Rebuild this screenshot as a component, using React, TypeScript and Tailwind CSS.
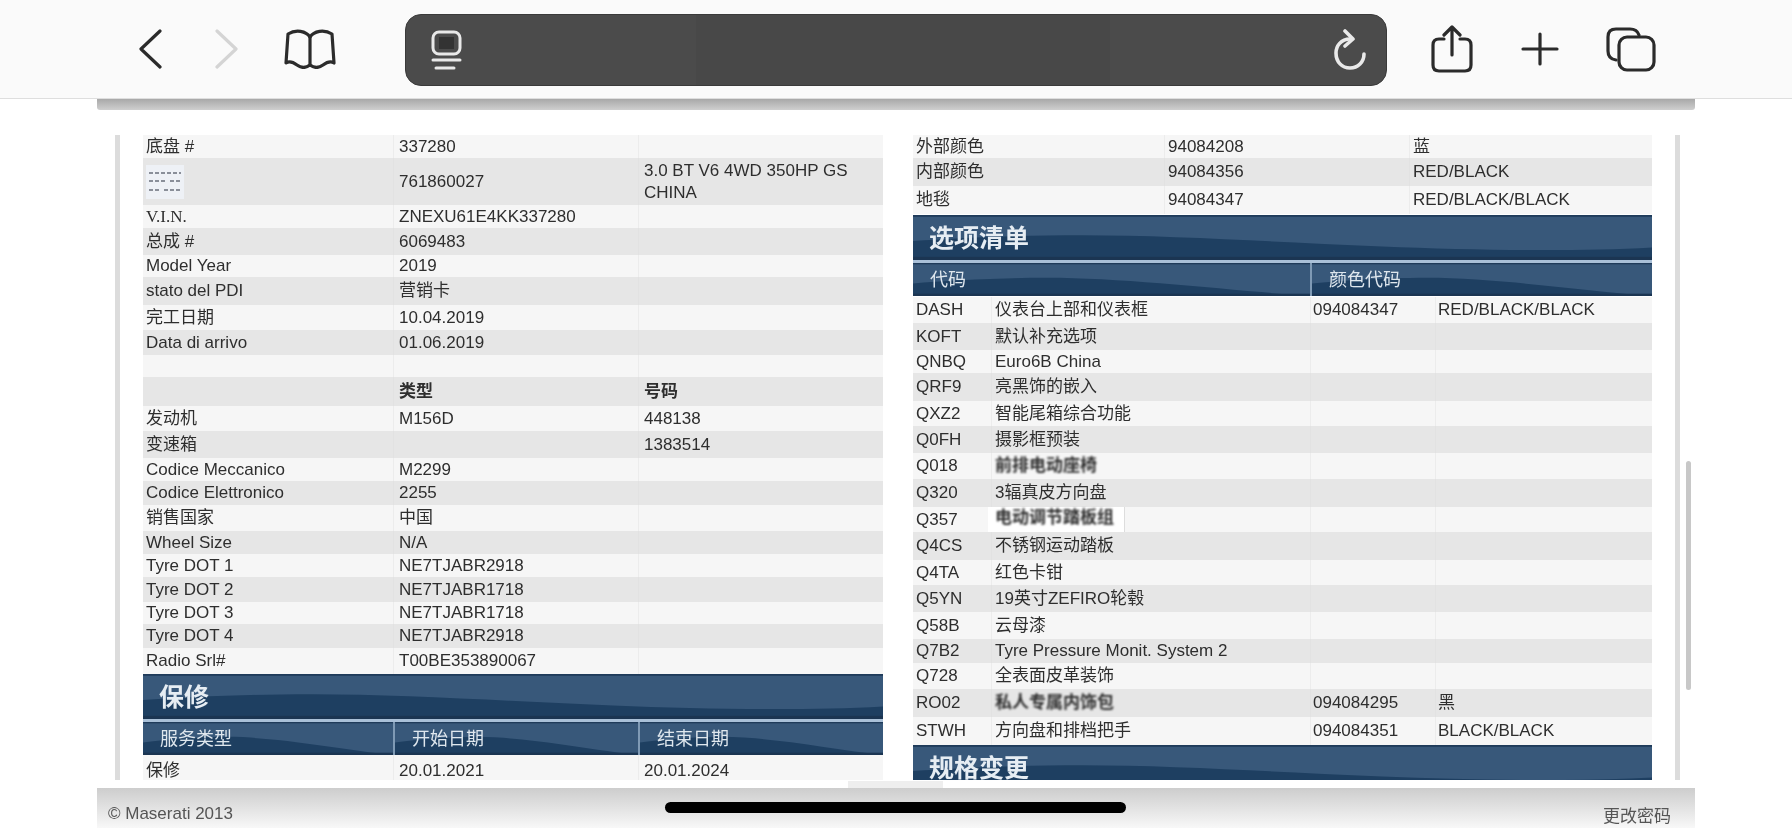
import React from "react";

const Wave = ({ small }: { small?: boolean }) => (
  <svg className="absolute inset-0 w-full h-full" viewBox="0 0 740 100" preserveAspectRatio="none">
    <rect width="740" height="100" fill="#1e3f61" />
    <path
      d={small ? "M0 0H740V100C600 85 400 45 250 45C150 45 60 55 0 62Z" : "M0 0H740V72C660 82 560 78 470 70C360 60 260 45 170 45C100 45 40 52 0 58Z"}
      fill="#38587a"
    />
    <rect width="740" height="4" fill="#1f3b5a" />
    <rect y="93" width="740" height="7" fill="#1b3552" />
  </svg>
);

const Band = ({ title }: { title: string }) => (
  <div className="relative h-[45px] overflow-hidden">
    <Wave />
    <div className="relative pl-[16px] text-[25px] leading-[46px] font-bold text-[#e6edf3]">{title}</div>
  </div>
);

const HeadRow = ({ cols, grid }: { cols: string[]; grid: string }) => (
  <div className={`grid ${grid} h-[36px] border-t-[3px] border-[#a9c0d8]`}>
    {cols.map((c, i) => (
      <div key={i} className={`relative overflow-hidden ${i ? "border-l-2 border-[#7f9ab5]" : ""}`}>
        <Wave small />
        <div className="relative pl-[17px] text-[18px] leading-[34px] text-[#dfe7ee]">{c}</div>
      </div>
    ))}
  </div>
);

type R = { h: string; c: React.ReactNode[]; bold?: boolean };

const Rows = ({ rows, grid, pads }: { rows: R[]; grid: string; pads: string[] }) => (
  <div>
    {rows.map((r, i) => (
      <div key={i} className={`grid ${grid} ${r.h} ${i % 2 ? "bg-[#e6e6e6]" : "bg-[#f6f6f6]"}`}>
        {r.c.map((t, j) => (
          <div
            key={j}
            className={`${pads[j]} ${j ? (i % 2 ? "border-l border-[#e2e2e2]" : "border-l border-[#ececec]") : ""} ${r.bold ? "font-bold" : ""} flex items-center whitespace-nowrap leading-[22px] text-[#2e2e2e]`}
          >
            {t}
          </div>
        ))}
      </div>
    ))}
  </div>
);

const Smudged = ({ children }: { children: React.ReactNode }) => <span className="blur-[1px] font-bold">{children}</span>;

const L = "grid-cols-[250px_245px_245px]";
const lp = ["pl-[3px]", "pl-[5px]", "pl-[5px]"];

const leftRows: R[] = [
  { h: "h-[23px]", c: ["底盘 #", "337280", ""] },
  {
    h: "h-[47px]",
    c: [
      <svg width="38" height="34" viewBox="0 0 38 34" className="blur-[0.6px]">
        <rect width="38" height="34" fill="#eef1f6" />
        <path d="M3 8H35M3 16H20M24 16H35M3 25H14M18 25H35" stroke="#8a8f99" strokeWidth="2" strokeDasharray="4 2" />
      </svg>,
      "761860027",
      <div className="whitespace-normal pr-[20px]">3.0 BT V6 4WD 350HP GS CHINA</div>,
    ],
  },
  { h: "h-[23px]", c: [<span className="font-['Liberation_Serif',serif]">V.I.N.</span>, "ZNEXU61E4KK337280", ""] },
  { h: "h-[27px]", c: ["总成 #", "6069483", ""] },
  { h: "h-[22px]", c: ["Model Year", "2019", ""] },
  { h: "h-[28px]", c: ["stato del PDI", "营销卡", ""] },
  { h: "h-[25px]", c: ["完工日期", "10.04.2019", ""] },
  { h: "h-[25px]", c: ["Data di arrivo", "01.06.2019", ""] },
  { h: "h-[22px]", c: ["", "", ""] },
  { h: "h-[29px]", c: ["", "类型", "号码"], bold: true },
  { h: "h-[25px]", c: ["发动机", "M156D", "448138"] },
  { h: "h-[27px]", c: ["变速箱", "", "1383514"] },
  { h: "h-[23px]", c: ["Codice Meccanico", "M2299", ""] },
  { h: "h-[24px]", c: ["Codice Elettronico", "2255", ""] },
  { h: "h-[26px]", c: ["销售国家", "中国", ""] },
  { h: "h-[23px]", c: ["Wheel Size", "N/A", ""] },
  { h: "h-[23px]", c: ["Tyre DOT 1", "NE7TJABR2918", ""] },
  { h: "h-[25px]", c: ["Tyre DOT 2", "NE7TJABR1718", ""] },
  { h: "h-[22px]", c: ["Tyre DOT 3", "NE7TJABR1718", ""] },
  { h: "h-[24px]", c: ["Tyre DOT 4", "NE7TJABR2918", ""] },
  { h: "h-[26px]", c: ["Radio Srl#", "T00BE353890067", ""] },
];

const R3 = "grid-cols-[251px_245px_243px]";
const R4 = "grid-cols-[78px_319px_125px_217px]";
const colorRows: R[] = [
  { h: "h-[23px]", c: ["外部颜色", "94084208", "蓝"] },
  { h: "h-[28px]", c: ["内部颜色", "94084356", "RED/BLACK"] },
  { h: "h-[28px]", c: ["地毯", "94084347", "RED/BLACK/BLACK"] },
];
const optionRows: R[] = [
  { h: "h-[26px]", c: ["DASH", "仪表台上部和仪表框", "094084347", "RED/BLACK/BLACK"] },
  { h: "h-[27px]", c: ["KOFT", "默认补充选项", "", ""] },
  { h: "h-[23px]", c: ["QNBQ", "Euro6B China", "", ""] },
  { h: "h-[28px]", c: ["QRF9", "亮黑饰的嵌入", "", ""] },
  { h: "h-[25px]", c: ["QXZ2", "智能尾箱综合功能", "", ""] },
  { h: "h-[27px]", c: ["Q0FH", "摄影框预装", "", ""] },
  { h: "h-[26px]", c: ["Q018", <Smudged>前排电动座椅</Smudged>, "", ""] },
  { h: "h-[28px]", c: ["Q320", "3辐真皮方向盘", "", ""] },
  {
    h: "h-[25px]",
    c: [
      "Q357",
      <div className="bg-white w-[137px] h-[25px] -ml-[7px] pl-[7px] border-r border-[#dddddd]">
        <Smudged>电动调节踏板组</Smudged>
      </div>,
      "",
      "",
    ],
  },
  { h: "h-[28px]", c: ["Q4CS", "不锈钢运动踏板", "", ""] },
  { h: "h-[25px]", c: ["Q4TA", "红色卡钳", "", ""] },
  { h: "h-[27px]", c: ["Q5YN", "19英寸ZEFIRO轮毂", "", ""] },
  { h: "h-[27px]", c: ["Q58B", "云母漆", "", ""] },
  { h: "h-[24px]", c: ["Q7B2", "Tyre Pressure Monit. System 2", "", ""] },
  { h: "h-[26px]", c: ["Q728", "全表面皮革装饰", "", ""] },
  { h: "h-[28px]", c: ["RO02", <Smudged>私人专属内饰包</Smudged>, "094084295", "黑"] },
  { h: "h-[28px]", c: ["STWH", "方向盘和排档把手", "094084351", "BLACK/BLACK"] },
];

const ic = { fill: "none", stroke: "currentColor", strokeWidth: 3.2, strokeLinecap: "round" as const, strokeLinejoin: "round" as const };

const TopBar = () => (
  <div className="h-[99px] shrink-0 bg-[#fafafa] border-b border-[#dedede] flex items-start text-[#2b2b2b]">
    <div className="w-[405px] h-full flex items-center pl-[136px] blur-[0.5px]">
      <svg width="28" height="40" viewBox="0 0 28 40" {...ic}><path d="M24 2L5 20L24 38" /></svg>
      <svg className="ml-[50px] text-[#d4d4d4]" width="26" height="40" viewBox="0 0 26 40" {...ic}><path d="M3 2L22 20L3 38" /></svg>
      <svg className="ml-[43px] mt-[2px]" width="54" height="42" viewBox="0 0 54 42" {...ic}>
        <path d="M27 8C23 2 13 0 5 5L3 34C6 32 10 33 14 36C18 39 23 39 27 36C31 39 36 39 40 36C44 33 48 32 51 34L49 5C41 0 31 2 27 8Z" />
        <path d="M27 8V35" />
      </svg>
    </div>
    <div className="w-[982px] h-[72px] mt-[14px] rounded-[16px] bg-[#4b4b4b] border border-[#3a3a3a] flex text-[#e9e9e9] blur-[0.4px]">
      <div className="w-[290px] pl-[24px] flex items-center">
        <svg width="34" height="40" viewBox="0 0 34 40" fill="none" stroke="currentColor" strokeWidth="3" strokeLinecap="round">
          <rect x="3" y="2" width="27" height="22" rx="6" />
          <rect x="9" y="7" width="15" height="12" fill="#333" stroke="none" />
          <path d="M3 30H30M6 38H24" />
        </svg>
      </div>
      <div className="w-[414px] bg-[#484848]" />
      <div className="flex-1 flex items-center justify-end pr-[18px]">
        <svg width="36" height="42" viewBox="0 0 36 42" fill="none" stroke="currentColor" strokeWidth="3.6" strokeLinecap="round" strokeLinejoin="round">
          <path d="M18 10C9 10 4 17 4 24C4 33 10 39 18 39C26 39 32 33 32 25" />
          <path d="M13 2L21 10L13 17" />
        </svg>
      </div>
    </div>
    <div className="flex-1 h-full flex items-center pl-[44px] blur-[0.5px]">
      <svg className="-mt-[1px]" width="42" height="48" viewBox="0 0 42 48" {...ic}>
        <path d="M13 14H8Q2 14 2 20V40Q2 46 8 46H34Q40 46 40 40V20Q40 14 34 14H29" />
        <path d="M21 30V3M13 10L21 2L29 10" />
      </svg>
      <svg className="ml-[48px]" width="38" height="34" viewBox="0 0 38 34" {...ic}><path d="M19 2V32M2 17H36" /></svg>
      <svg className="ml-[47px]" width="50" height="45" viewBox="0 0 50 45" {...ic}>
        <path d="M10 33Q2 32 2 24V10Q2 2 10 2H24Q31 2 33 8" />
        <rect x="13" y="10" width="35" height="33" rx="8" />
      </svg>
    </div>
  </div>
);

export default function App() {
  return (
    <div className="w-[1792px] h-[828px] overflow-hidden bg-white flex flex-col text-[17px] font-['Liberation_Sans','Noto_Sans_CJK_SC',sans-serif]">
      <TopBar />
      <div className="mx-[97px] h-[11px] shrink-0 bg-gradient-to-b from-[#a8a8a8] to-[#cfcfcf] rounded-b-[3px]" />
      <div className="flex-1 min-h-0 pt-[25px] pl-[115px] pr-[112px] flex flex-col">
        <div className="h-[645px] overflow-hidden border-l-[5px] border-r-[5px] border-[#dcdcdc] flex pl-[23px] blur-[0.7px]">
          <div className="w-[740px] shrink-0">
            <Rows rows={leftRows} grid={L} pads={lp} />
            <Band title="保修" />
            <HeadRow cols={["服务类型", "开始日期", "结束日期"]} grid={L} />
            <Rows rows={[{ h: "h-[32px]", c: ["保修", "20.01.2021", "20.01.2024"] }]} grid={L} pads={lp} />
          </div>
          <div className="w-[739px] shrink-0 ml-[30px]">
            <Rows rows={colorRows} grid={R3} pads={["pl-[3px]", "pl-[3px]", "pl-[3px]"]} />
            <div className="h-[1px]" />
            <Band title="选项清单" />
            <HeadRow cols={["代码", "颜色代码"]} grid="grid-cols-[397px_342px]" />
            <div className="h-[1px]" />
            <Rows rows={optionRows} grid={R4} pads={["pl-[3px]", "pl-[3px]", "pl-[2px]", "pl-[2px]"]} />
            <Band title="规格变更" />
          </div>
        </div>
      </div>
      <div className="relative mx-[97px] h-[40px] shrink-0 bg-gradient-to-b from-[#cdcdcd] to-[#f8f8f8] flex items-end justify-between pl-[11px] pr-[24px] text-[#555555]">
        <span className="text-[17px] leading-[26px] pb-[1px] blur-[0.6px]">© Maserati 2013</span>
        <span className="text-[17px] leading-[22px] blur-[0.6px]">更改密码</span>
        <div className="absolute left-[751px] -top-[7px] w-[95px] h-[7px] bg-[#eeeeee]" />
      </div>
      <div className="absolute left-[665px] top-[802px] w-[461px] h-[11px] rounded-full bg-black" />
      <div className="absolute left-[1686px] top-[461px] w-[5px] h-[229px] rounded-full bg-[#c8c8c8]" />
    </div>
  );
}
